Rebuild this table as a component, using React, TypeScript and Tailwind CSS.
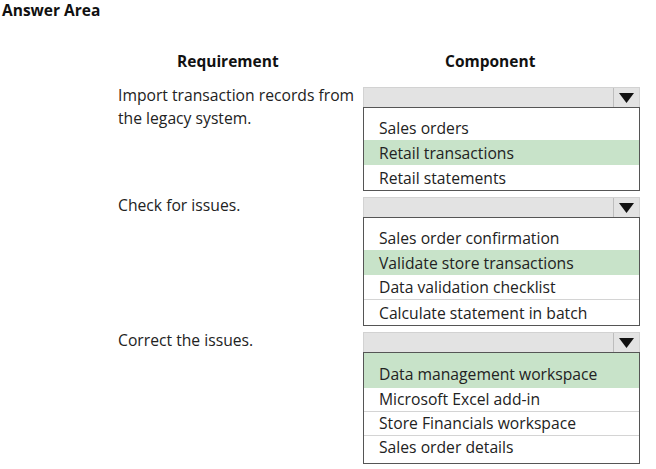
const rows = [
  {
    label: ["Import transaction records from", "the legacy system."],
    items: [
      { text: "Sales orders" },
      { text: "Retail transactions", on: true },
      { text: "Retail statements" },
    ],
  },
  {
    label: ["Check for issues."],
    items: [
      { text: "Sales order confirmation" },
      { text: "Validate store transactions", on: true },
      { text: "Data validation checklist", line: true },
      { text: "Calculate statement in batch" },
    ],
  },
  {
    label: ["Correct the issues."],
    items: [
      { text: "Data management workspace", on: true },
      { text: "Microsoft Excel add-in", line: true },
      { text: "Store Financials workspace", line: true },
      { text: "Sales order details" },
    ],
  },
];

function Dropdown({ items }: { items: { text: string; on?: boolean; line?: boolean }[] }) {
  const firstOn = items[0].on;
  return (
    <div className="w-[277px]">
      <div className="flex h-[20px] bg-[#e3e3e3] border border-[#d2d2d2] border-b-0">
        <div className="flex-1" />
        <div className="w-[26px] border-l border-[#bdbdbd] flex items-center justify-center">
          <svg width="15" height="10" viewBox="0 0 15 10">
            <path d="M0 0 H15 L7.5 10 Z" fill="#111" />
          </svg>
        </div>
      </div>
      <div className={`border border-[#555] ${firstOn ? "pt-0 pb-[3px]" : "pt-[7px] pb-0"}`}>
        {items.map((it, i) => (
          <div
            key={i}
            className={`px-[15px] flex items-center ${
              it.on ? "bg-[#c8e3c9]" : ""
            } ${it.on && i === 0 ? "h-[35px] pt-[8px]" : firstOn ? "h-[24px]" : "h-[25px] pt-[2px]"} ${
              it.line ? "border-b border-[#d4d4d4]" : ""
            }`}
          >
            {it.text}
          </div>
        ))}
      </div>
    </div>
  );
}

export default function App() {
  return (
    <div
      className="w-[656px] h-[469px] bg-white text-[#222] text-[15.7px] overflow-hidden"
      style={{ fontFamily: '"Open Sans", "Noto Sans", sans-serif' }}
    >
      <div className="pl-[2px] font-bold text-[15.5px] text-[#111] leading-[20px]">Answer Area</div>
      <div className="flex pt-[30px] pl-[118px] font-bold text-[15.5px] text-[#111] leading-[22px]">
        <div className="w-[245px] pl-[59px]">Requirement</div>
        <div className="pl-[82px]">Component</div>
      </div>
      <div className="flex flex-col pl-[118px] pt-[15px] gap-[6px]">
        {rows.map((r, i) => (
          <div key={i} className="flex items-start">
            <div className="w-[245px] leading-[23px] -mt-[3px]">
              {r.label.map((l, j) => (
                <div key={j}>{l}</div>
              ))}
            </div>
            <Dropdown items={r.items} />
          </div>
        ))}
      </div>
    </div>
  );
}
